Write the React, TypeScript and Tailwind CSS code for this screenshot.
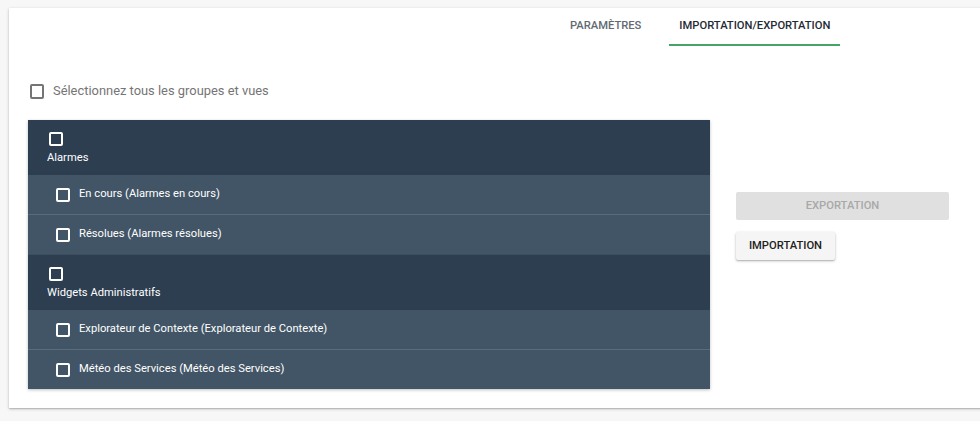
import React from "react";

function Box({ className = "" }: { className?: string }) {
  return <span className={`block shrink-0 w-[14px] h-[14px] rounded-[2px] border-2 ${className}`} />;
}

const groups = [
  {
    name: "Alarmes",
    items: ["En cours (Alarmes en cours)", "Résolues (Alarmes résolues)"],
  },
  {
    name: "Widgets Administratifs",
    items: [
      "Explorateur de Contexte (Explorateur de Contexte)",
      "Météo des Services (Météo des Services)",
    ],
  },
];

export default function App() {
  return (
    <div
      className="w-[980px] h-[421px] overflow-hidden bg-[#f7f7f7] pt-[8px] pl-[9px]"
      style={{ fontFamily: "Roboto, 'Noto Sans', sans-serif" }}
    >
      <div className="w-[990px] h-[400px] bg-white shadow-[0_1px_3px_rgba(0,0,0,0.22),0_1px_1px_rgba(0,0,0,0.12)]">
        <div className="flex justify-start pl-[551px] h-[38px]">
          <div className="h-[38px] px-[10px] flex items-center text-[11.2px] font-medium text-[#616a73] uppercase border-b-2 border-transparent">
            Paramètres
          </div>
          <div className="ml-[18px] h-[38px] px-[10px] flex items-center text-[11.2px] font-medium text-[#1f2a33] uppercase border-b-2 border-[#43a665]">
            Importation/Exportation
          </div>
        </div>

        <div className="pl-[21px] mt-[38px] flex items-center h-[14px]">
          <span className="block w-[14px] h-[15px] rounded-[2px] border-2 border-[#757575]" />
          <span className="ml-[9px] text-[12.9px] text-[#757575]">Sélectionnez tous les groupes et vues</span>
        </div>

        <div className="flex mt-[22px] pl-[19px]">
          <div className="w-[682px] shadow-[0_1px_3px_rgba(0,0,0,0.25)]">
            {groups.map((g, gi) => (
              <div key={g.name}>
                <div
                  className={`bg-[#2c3e50] pl-[19px] text-white ${gi > 0 ? "border-t border-[#3d4f5f] h-[56px] pt-[12px]" : "h-[55px] pt-[12px]"}`}
                >
                  <div className="pl-[2px]">
                    <Box className="border-white" />
                  </div>
                  <div className="text-[11.2px] mt-[2px] leading-[20px]">{g.name}</div>
                </div>
                {g.items.map((it, i) => (
                  <div
                    key={it}
                    className={`bg-[#425566] flex items-center pl-[28px] text-white text-[11.2px] ${i > 0 ? "border-t border-[#5a6c7b] h-[40px]" : "h-[39px]"}`}
                  >
                    <Box className="border-white" />
                    <span className="ml-[9px]">{it}</span>
                  </div>
                ))}
              </div>
            ))}
          </div>

          <div className="ml-[26px] pt-[72px] flex flex-col items-start">
            <div className="w-[213px] h-[28px] rounded-[2px] bg-[#e0e0e0] flex items-center justify-center text-[11.2px] font-medium text-[#a8a8a8] uppercase">
              Exportation
            </div>
            <div className="mt-[12px] w-[99px] h-[28px] rounded-[2px] bg-[#f5f5f5] flex items-center justify-center text-[11.2px] font-medium text-[#212121] uppercase shadow-[0_1px_3px_rgba(0,0,0,0.25),0_1px_1px_rgba(0,0,0,0.12)]">
              Importation
            </div>
          </div>
        </div>
      </div>
    </div>
  );
}
